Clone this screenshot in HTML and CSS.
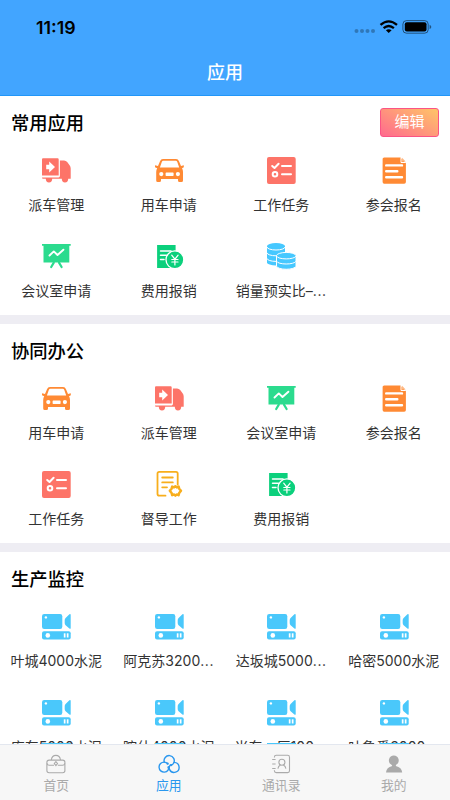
FILE: index.html
```html
<!DOCTYPE html>
<html lang="zh-CN">
<head>
<meta charset="utf-8">
<meta name="viewport" content="width=device-width, initial-scale=1">
<title>应用</title>
<link rel="stylesheet" href="styles.css">
</head>
<body>
<svg class="sprite" aria-hidden="true">
  <symbol id="truck" viewBox="0 0 30 30">
    <path fill="#fd7468" fill-rule="evenodd" d="M2 3.3H16.6Q17.7 3.3 17.7 4.4V20.6H1V4.4Q1 3.3 2 3.3ZM5.2 9.8V14.3H8.2V17.5L14 12L8.2 6.6V9.8Z"/>
    <path fill="#fd7468" d="M18.9 5.5H23Q25 5.5 26.2 7L28.6 10.2Q29.7 11.6 29.7 13.4V23.8H27.2A3.2 3.6 0 0 1 20.8 23.8H11.2A3.2 3.6 0 0 1 4.8 23.8H2Q1 23.8 1 22.4H17.6Q18.9 22.4 18.9 21Z"/>
  </symbol>
  <symbol id="car" viewBox="0 0 30 30">
    <path fill="#ff8a34" fill-rule="evenodd" d="M9 4H22Q24.2 4 25 6.2L27 11L29.8 10.3V12.3L28 13.2Q29 14.8 29 17V25.5Q29 27 27.5 27H25.5Q24 27 24 25.5V24H7V25.5Q7 27 5.5 27H3.7Q2.2 27 2.2 25.5V17Q2.2 14.8 3.2 13.2L1 12.3V10.3L4 11L6 6.2Q6.8 4 9 4ZM9.4 5.8Q8.2 5.8 7.8 7L5.9 12.4H25.2L23.3 7Q22.9 5.8 21.7 5.8ZM7.3 17A2.1 2.1 0 1 0 7.3 21.2A2.1 2.1 0 1 0 7.3 17ZM23.9 17A2.1 2.1 0 1 0 23.9 21.2A2.1 2.1 0 1 0 23.9 17ZM12.3 17.6Q11.6 17.6 11.6 18.3V20.2Q11.6 20.9 12.3 20.9H18.9Q19.6 20.9 19.6 20.2V18.3Q19.6 17.6 18.9 17.6Z"/>
  </symbol>
  <symbol id="task" viewBox="0 0 30 30">
    <rect x="1" y="2" width="28.7" height="27" rx="2" fill="#fd7468"/>
    <g fill="none" stroke="#fff" stroke-width="2" stroke-linecap="round" stroke-linejoin="round"><path d="M6.2 11L8.5 13L12.6 8.8M16 11H25M16 19.3H25"/><circle cx="9" cy="19.3" r="2.3"/></g>
  </symbol>
  <symbol id="signup" viewBox="0 0 30 30">
    <path fill="#ff8a34" d="M5.2 2.4H21.4L26.9 8V27Q26.9 28.8 25.2 28.8H5.2Q3.6 28.8 3.6 27V4Q3.6 2.4 5.2 2.4Z"/>
    <path fill="#ffb984" d="M23 2.7L26.7 6.4H23Z"/>
    <path d="M22 2.8V7.5H26.7" fill="none" stroke="#fff" stroke-width="1"/>
    <path d="M7.2 10.4H23M7.2 16.2H18.3M7.2 22.2H23" fill="none" stroke="#fff" stroke-width="2.4" stroke-linecap="round"/>
  </symbol>
  <symbol id="board" viewBox="0 0 30 30">
    <path fill="#2bdb8e" d="M1 3H29.7V4.8H28.3V21.4H2.5V4.8H1Z"/>
    <path d="M8.5 14.5L12.8 10.4L16.5 14L22.4 8.7" fill="none" stroke="#fff" stroke-width="1.9" stroke-linecap="round" stroke-linejoin="round"/>
    <path d="M12.8 21.6L10.2 26M18 21.6L20.6 26" stroke="#2bdb8e" stroke-width="2.2" stroke-linecap="round"/>
  </symbol>
  <symbol id="fee" viewBox="0 0 30 30">
    <path fill="#0bd07c" d="M3.1 4H21.6V27H3.1Z"/>
    <path d="M6.5 10H17M6.5 14.2H12.5M6.5 18.4H10" stroke="#fff" stroke-width="1.5" stroke-linecap="round"/>
    <circle cx="20.9" cy="18.8" r="8.9" fill="#0bd07c" stroke="#fff" stroke-width="1.3"/>
    <path d="M17.7 14.2L20.9 18.2L24.1 14.2M17.8 18.5H24M17.8 21H24M20.9 18.2V24" fill="none" stroke="#fff" stroke-width="1.2" stroke-linecap="round"/>
  </symbol>
  <symbol id="coins" viewBox="0 0 30 30">
    <path fill="#46c8ff" d="M1 5A9 3 0 0 1 19 5V21.5A9 3 0 0 1 1 21.5Z"/>
    <path d="M1 6A9 3 0 0 0 19 6M1 11.8A9 3 0 0 0 19 11.8M1 17.4A9 3 0 0 0 19 17.4" fill="none" stroke="#fff" stroke-width="1"/>
    <path fill="#46c8ff" stroke="#fff" stroke-width="1" d="M10.5 14.5A9.8 3.4 0 0 1 30 14.5V25.2A9.8 3.4 0 0 1 10.5 25.2Z"/>
    <path d="M10.7 15.2A9.6 3 0 0 0 29.8 15.2M10.7 20.3A9.6 3 0 0 0 29.8 20.3" fill="none" stroke="#fff" stroke-width="1"/>
  </symbol>
  <symbol id="supervise" viewBox="0 0 30 30">
    <g fill="none" stroke="#f8ae1c" stroke-width="1.8" stroke-linecap="round" stroke-linejoin="round">
      <path d="M11.5 26.7H5.2Q3.5 26.7 3.5 25V4.6Q3.5 2.9 5.2 2.9H22Q23.7 2.9 23.7 4.6V15.5M8.2 8.5H18.8M8.2 13.4H18.8M8.2 18.3H13"/>
      <path stroke-width="2.5" d="M18.2 17.6L20 18.4L21.4 17.2L22.8 18.4L24.6 17.6L25.2 19.7L27 21.8L25.2 24L24.6 26.2L22.8 25.4L21.4 26.6L20 25.4L18.2 26.2L17.6 24L15.8 21.8L17.6 19.7Z"/>
    </g>
  </symbol>
  <symbol id="camera" viewBox="0 0 30 30">
    <g fill="#4ac8fb"><rect x="1" y="3" width="20.3" height="15" rx="2.2"/><path d="M28.4 3.3Q29.7 2.7 29.7 4V17Q29.7 18.3 28.4 17.6L24.6 14.2Q23.7 13.4 23.7 12V9.2Q23.7 7.8 24.6 7Z"/><rect x="1" y="20.2" width="28.7" height="8.2" rx="2"/></g>
    <g fill="#fff"><circle cx="4.9" cy="6.4" r="1.2"/><circle cx="6.8" cy="24.4" r="2.3"/><rect x="22.8" y="22.3" width="1.7" height="4.2"/><rect x="25.8" y="22.3" width="1.7" height="4.2"/></g>
  </symbol>
</svg>

<div class="phone">
  <header class="header">
    <div class="status">
      <span class="time">11:19</span>
      <svg class="signals" viewBox="0 0 80 16" width="80" height="16">
        <g fill="#000" fill-opacity=".28"><circle cx="3.5" cy="11" r="2"/><circle cx="9" cy="11" r="2"/><circle cx="14.5" cy="11" r="2"/><circle cx="20" cy="11" r="2"/></g>
        <g fill="none" stroke="#000" stroke-width="2.3"><path d="M27.5 4.9Q35.7 -2.2 44 4.9M30.6 8.2Q35.7 3.8 40.9 8.2"/></g>
        <path d="M32.9 10.2Q35.7 8.2 38.6 10.2L35.7 13Z"/>
        <rect x="49.9" y=".6" width="25.3" height="12.6" rx="3.6" fill="none" stroke="#000" stroke-opacity=".5"/>
        <rect x="51.8" y="2.3" width="21.7" height="9.3" rx="2"/>
        <path d="M76.6 4.8Q78.3 5.5 78.3 7Q78.3 8.4 76.6 9Z" fill-opacity=".5"/>
      </svg>
    </div>
    <h1 class="page-title">应用</h1>
  </header>

  <main class="content">
    <section class="section">
      <div class="section-head"><h2>常用应用</h2><button class="edit">编辑</button></div>
      <div class="grid">
        <div class="app"><svg><use href="#truck"/></svg><span>派车管理</span></div>
        <div class="app"><svg><use href="#car"/></svg><span>用车申请</span></div>
        <div class="app"><svg><use href="#task"/></svg><span>工作任务</span></div>
        <div class="app"><svg><use href="#signup"/></svg><span>参会报名</span></div>
        <div class="app"><svg><use href="#board"/></svg><span>会议室申请</span></div>
        <div class="app"><svg><use href="#fee"/></svg><span>费用报销</span></div>
        <div class="app"><svg><use href="#coins"/></svg><span>销量预实比–<i>...</i></span></div>
      </div>
    </section>
    <section class="section">
      <div class="section-head"><h2>协同办公</h2></div>
      <div class="grid">
        <div class="app"><svg><use href="#car"/></svg><span>用车申请</span></div>
        <div class="app"><svg><use href="#truck"/></svg><span>派车管理</span></div>
        <div class="app"><svg><use href="#board"/></svg><span>会议室申请</span></div>
        <div class="app"><svg><use href="#signup"/></svg><span>参会报名</span></div>
        <div class="app"><svg><use href="#task"/></svg><span>工作任务</span></div>
        <div class="app"><svg><use href="#supervise"/></svg><span>督导工作</span></div>
        <div class="app"><svg><use href="#fee"/></svg><span>费用报销</span></div>
      </div>
    </section>
    <section class="section">
      <div class="section-head"><h2>生产监控</h2></div>
      <div class="grid">
        <div class="app"><svg><use href="#camera"/></svg><span>叶城4000水泥</span></div>
        <div class="app"><svg><use href="#camera"/></svg><span>阿克苏3200<i>...</i></span></div>
        <div class="app"><svg><use href="#camera"/></svg><span>达坂城5000<i>...</i></span></div>
        <div class="app"><svg><use href="#camera"/></svg><span>哈密5000水泥</span></div>
        <div class="app"><svg><use href="#camera"/></svg><span>库车5000水泥</span></div>
        <div class="app"><svg><use href="#camera"/></svg><span>喀什4000水泥</span></div>
        <div class="app"><svg><use href="#camera"/></svg><span>米东一厂100<i>...</i></span></div>
        <div class="app"><svg><use href="#camera"/></svg><span>吐鲁番3000<i>...</i></span></div>
      </div>
    </section>
  </main>

  <nav class="tabbar">
    <div class="tab">
      <svg viewBox="0 0 22 22"><g fill="none" stroke="currentColor" stroke-width="1.1"><rect x="1.9" y="7.1" width="18" height="12.6" rx="2.2"/><path d="M6.3 7Q7 2.4 10.9 2.4Q14.8 2.4 15.5 7M2 10.3Q2.3 12.3 4.3 12.3H9M12.8 12.3H17.5Q19.5 12.3 19.8 10.3"/><path d="M10.9 8.7L12.5 10.5L10.9 12.6L9.3 10.5Z"/></g></svg>
      <span>首页</span>
    </div>
    <div class="tab active">
      <svg viewBox="0 0 22 22"><g fill="none" stroke="currentColor" stroke-width="1.4" stroke-linecap="round"><path d="M6.3 9.2A5.1 5.1 0 1 1 15.6 10.2Q14.8 11.8 13 12.2"/><path d="M9.8 10.8A5 5 0 1 0 10 17.2Q10.9 15.7 10.3 13.8"/><path d="M16.3 9.4A5 5 0 1 1 11.6 16.6Q10.5 14.5 12 12.3"/></g><circle cx="13" cy="12.1" r="1.2" fill="currentColor"/><circle cx="9.6" cy="10.7" r="1.1" fill="currentColor"/><circle cx="10.6" cy="14.5" r="1.1" fill="currentColor"/></svg>
      <span>应用</span>
    </div>
    <div class="tab">
      <svg viewBox="0 0 22 22"><g fill="none" stroke="currentColor" stroke-width="1.1"><path d="M4.4 4.6V4.2Q4.4 2.3 6.3 2.3H17.6Q19.5 2.3 19.5 4.2V17.7Q19.5 19.6 17.6 19.6H6.3Q4.4 19.6 4.4 17.7V17.3M2.2 6.5H5.6M2.2 11H5.6M2.2 15.5H5.6"/><circle cx="11.9" cy="9.3" r="3"/><path d="M7.9 15.6Q8.3 12.9 10.5 12M15.9 15.6Q15.5 12.9 13.3 12"/></g></svg>
      <span>通讯录</span>
    </div>
    <div class="tab">
      <svg viewBox="0 0 22 22"><path fill="currentColor" d="M10.8 2.4A5 5 0 0 1 13.4 11.6Q12.8 12.2 12.8 13Q18.8 14.3 19.2 19.6H3Q3.4 14.3 9.2 13Q9.2 12.2 8.2 11.6A5 5 0 0 1 10.8 2.4Z"/></svg>
      <span>我的</span>
    </div>
  </nav>
</div>
</body>
</html>
```
FILE: styles.css
```css
* { box-sizing: border-box; }

body {
  margin: 0;
  font-family: Inter, "Noto Sans CJK SC", sans-serif;
  color: #333;
  background: #fff;
}

h1, h2 { margin: 0; }

.sprite { display: none; }

.phone {
  display: flex;
  flex-direction: column;
  width: 450px;
  height: 800px;
  overflow: hidden;
}

.header {
  flex: none;
  height: 96px;
  background: #42a5ff;
  border-bottom: 1px solid #2196f8;
  color: #fff;
}

.status {
  display: flex;
  justify-content: space-between;
  align-items: center;
  height: 48px;
  padding: 7px 17px 0 36px;
}

.time {
  color: #000;
  font-size: 17.8px;
  font-weight: 600;
  line-height: 20px;
}

.signals { display: block; }

.page-title {
  height: 48px;
  padding-top: 1px;
  font-size: 18px;
  font-weight: 500;
  line-height: 48px;
  text-align: center;
}

.content {
  flex: 1;
  min-height: 0;
  overflow: hidden;
}

.section {
  height: 219px;
  margin-bottom: 9px;
  background: #fff;
  box-shadow: 0 9px 0 #eeedf3;
}

.section-head {
  display: flex;
  justify-content: space-between;
  align-items: center;
  height: 47px;
  padding: 5px 11px 0;
}

.section-head h2 {
  padding-top: 1px;
  font-size: 18.3px;
  font-weight: 500;
  line-height: 26px;
  color: #000;
}

.edit {
  width: 59px;
  height: 29px;
  padding: 0;
  border: 1px solid #fb5484;
  border-radius: 3px;
  background: linear-gradient(30deg, #ff6a8e, #ffc568);
  color: #fff;
  font: 400 15px/26px Inter, "Noto Sans CJK SC", sans-serif;
}

.grid {
  display: grid;
  grid-template-columns: repeat(4, 1fr);
  grid-auto-rows: 86px;
}

.app {
  display: flex;
  flex-direction: column;
  align-items: center;
  padding-top: 12px;
}

.app svg {
  display: block;
  width: 30px;
  height: 30px;
}

.app span {
  margin-top: 10px;
  font-size: 14px;
  line-height: 20px;
  white-space: nowrap;
}

.app i {
  font-style: normal;
  letter-spacing: 0.6px;
}

.tabbar {
  flex: none;
  display: grid;
  grid-template-columns: repeat(4, 1fr);
  height: 56px;
  background: #f7f7f7;
  border-top: 1px solid #e3e7ef;
  color: #aaa;
}

.tab {
  position: relative;
  display: flex;
  flex-direction: column;
  align-items: center;
  padding-top: 8px;
}

/* Blue sliver along the top edge of the bar */
.tab::before {
  content: "";
  position: absolute;
  top: -2px;
  left: 42px;
  width: 29px;
  height: 1px;
  background: #4ac8fb;
}

.tab svg {
  display: block;
  width: 22px;
  height: 22px;
}

.tab span {
  margin-top: 2px;
  font-size: 12.8px;
  line-height: 18px;
}

.tab.active { color: #2a97ee; }
```
